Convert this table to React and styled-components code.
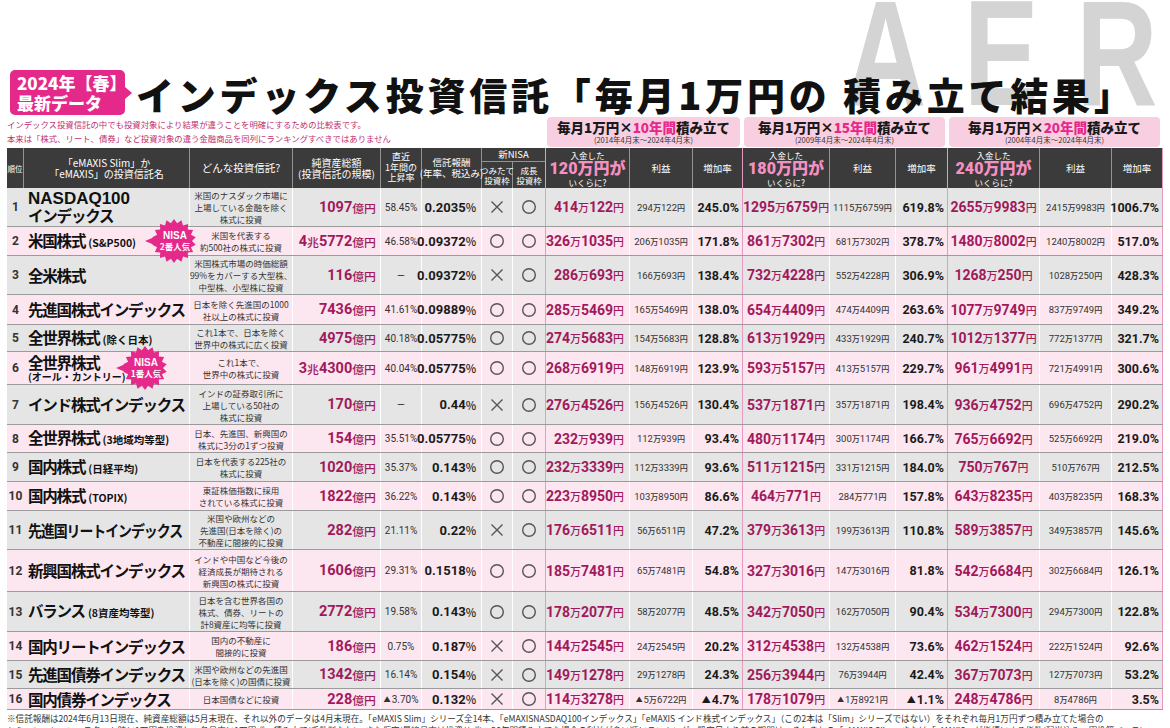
import React from "react";
import styled, { createGlobalStyle } from "styled-components";

const COLS = "17px 166px 103px 88px 41px 60px 31px 33px 84px 63px 50px 87px 66px 52px 92px 72px 51px";
const JP = `"Noto Sans CJK JP", sans-serif`;
const NUM = `"Liberation Sans Narrow", "Roboto", "Noto Sans CJK JP", sans-serif`;
const MAGENTA = "#a1195c";
const PINK = "#e5298a";
const GROUP_LINE = "#e59bbf";

const groups = [
  { years: "10年間", span: "(2014年4月末～2024年4月末)", paid: "120万円が" },
  { years: "15年間", span: "(2009年4月末～2024年4月末)", paid: "180万円が" },
  { years: "20年間", span: "(2004年4月末～2024年4月末)", paid: "240万円が" },
];

const funds = [
  { rank: 1, lines: ["NASDAQ100", "インデックス"], latin: true, h: 39,
    desc: ["米国のナスダック市場に", "上場している金融を除く", "株式に投資"],
    asset: "1097億円", rise: "58.45%", fee: "0.2035%", tsumitate: false,
    res: [["414万122円", "294万122円", "245.0%"], ["1295万6759円", "1115万6759円", "619.8%"], ["2655万9983円", "2415万9983円", "1006.7%"]] },
  { rank: 2, name: "米国株式", sub: "(S&P500)", badge: "2番人気", h: 29,
    desc: ["米国を代表する", "約500社の株式に投資"],
    asset: "4兆5772億円", rise: "46.58%", fee: "0.09372%", tsumitate: true,
    res: [["326万1035円", "206万1035円", "171.8%"], ["861万7302円", "681万7302円", "378.7%"], ["1480万8002円", "1240万8002円", "517.0%"]] },
  { rank: 3, name: "全米株式", h: 39,
    desc: ["米国株式市場の時価総額", "99%をカバーする大型株、", "中型株、小型株に投資"],
    asset: "116億円", rise: "—", fee: "0.09372%", tsumitate: false,
    res: [["286万693円", "166万693円", "138.4%"], ["732万4228円", "552万4228円", "306.9%"], ["1268万250円", "1028万250円", "428.3%"]] },
  { rank: 4, name: "先進国株式インデックス", h: 30,
    desc: ["日本を除く先進国の1000", "社以上の株式に投資"],
    asset: "7436億円", rise: "41.61%", fee: "0.09889%", tsumitate: true,
    res: [["285万5469円", "165万5469円", "138.0%"], ["654万4409円", "474万4409円", "263.6%"], ["1077万9749円", "837万9749円", "349.2%"]] },
  { rank: 5, name: "全世界株式", sub: "(除く日本)", h: 27,
    desc: ["これ1本で、日本を除く", "世界中の株式に広く投資"],
    asset: "4975億円", rise: "40.18%", fee: "0.05775%", tsumitate: true,
    res: [["274万5683円", "154万5683円", "128.8%"], ["613万1929円", "433万1929円", "240.7%"], ["1012万1377円", "772万1377円", "321.7%"]] },
  { rank: 6, name: "全世界株式", second: "(オール・カントリー)", badge: "1番人気", h: 33,
    desc: ["これ1本で、", "世界中の株式に投資"],
    asset: "3兆4300億円", rise: "40.04%", fee: "0.05775%", tsumitate: true,
    res: [["268万6919円", "148万6919円", "123.9%"], ["593万5157円", "413万5157円", "229.7%"], ["961万4991円", "721万4991円", "300.6%"]] },
  { rank: 7, name: "インド株式インデックス", h: 40,
    desc: ["インドの証券取引所に", "上場している50社の", "株式に投資"],
    asset: "170億円", rise: "—", fee: "0.44%", tsumitate: false,
    res: [["276万4526円", "156万4526円", "130.4%"], ["537万1871円", "357万1871円", "198.4%"], ["936万4752円", "696万4752円", "290.2%"]] },
  { rank: 8, name: "全世界株式", sub: "(3地域均等型)", h: 28,
    desc: ["日本、先進国、新興国の", "株式に3分の1ずつ投資"],
    asset: "154億円", rise: "35.51%", fee: "0.05775%", tsumitate: true,
    res: [["232万939円", "112万939円", "93.4%"], ["480万1174円", "300万1174円", "166.7%"], ["765万6692円", "525万6692円", "219.0%"]] },
  { rank: 9, name: "国内株式", sub: "(日経平均)", h: 29,
    desc: ["日本を代表する225社の", "株式に投資"],
    asset: "1020億円", rise: "35.37%", fee: "0.143%", tsumitate: true,
    res: [["232万3339円", "112万3339円", "93.6%"], ["511万1215円", "331万1215円", "184.0%"], ["750万767円", "510万767円", "212.5%"]] },
  { rank: 10, name: "国内株式", sub: "(TOPIX)", h: 29,
    desc: ["東証株価指数に採用", "されている株式に投資"],
    asset: "1822億円", rise: "36.22%", fee: "0.143%", tsumitate: true,
    res: [["223万8950円", "103万8950円", "86.6%"], ["464万771円", "284万771円", "157.8%"], ["643万8235円", "403万8235円", "168.3%"]] },
  { rank: 11, name: "先進国リートインデックス", squeeze: 0.9, h: 39,
    desc: ["米国や欧州などの", "先進国(日本を除く)の", "不動産に間接的に投資"],
    asset: "282億円", rise: "21.11%", fee: "0.22%", tsumitate: false,
    res: [["176万6511円", "56万6511円", "47.2%"], ["379万3613円", "199万3613円", "110.8%"], ["589万3857円", "349万3857円", "145.6%"]] },
  { rank: 12, name: "新興国株式インデックス", h: 42,
    desc: ["インドや中国など今後の", "経済成長が期待される", "新興国の株式に投資"],
    asset: "1606億円", rise: "29.31%", fee: "0.1518%", tsumitate: true,
    res: [["185万7481円", "65万7481円", "54.8%"], ["327万3016円", "147万3016円", "81.8%"], ["542万6684円", "302万6684円", "126.1%"]] },
  { rank: 13, name: "バランス", sub: "(8資産均等型)", h: 40,
    desc: ["日本を含む世界各国の", "株式、債券、リートの", "計8資産に均等に投資"],
    asset: "2772億円", rise: "19.58%", fee: "0.143%", tsumitate: true,
    res: [["178万2077円", "58万2077円", "48.5%"], ["342万7050円", "162万7050円", "90.4%"], ["534万7300円", "294万7300円", "122.8%"]] },
  { rank: 14, name: "国内リートインデックス", h: 29,
    desc: ["国内の不動産に", "間接的に投資"],
    asset: "186億円", rise: "0.75%", fee: "0.187%", tsumitate: false,
    res: [["144万2545円", "24万2545円", "20.2%"], ["312万4538円", "132万4538円", "73.6%"], ["462万1524円", "222万1524円", "92.6%"]] },
  { rank: 15, name: "先進国債券インデックス", h: 28,
    desc: ["米国や欧州などの先進国", "(日本を除く)の国債に投資"],
    asset: "1342億円", rise: "16.14%", fee: "0.154%", tsumitate: false,
    res: [["149万1278円", "29万1278円", "24.3%"], ["256万3944円", "76万3944円", "42.4%"], ["367万7073円", "127万7073円", "53.2%"]] },
  { rank: 16, name: "国内債券インデックス", h: 21,
    desc: ["日本国債などに投資"],
    asset: "228億円", rise: "▲3.70%", fee: "0.132%", tsumitate: false,
    res: [["114万3278円", "▲5万6722円", "▲4.7%"], ["178万1079円", "▲1万8921円", "▲1.1%"], ["248万4786円", "8万4786円", "3.5%"]] },
];

const GlobalStyle = createGlobalStyle`
  html, body { margin: 0; padding: 0; background: #fff; }
  body { font-family: ${JP}; color: #222; width: 1170px; height: 728px; overflow: hidden; }
`;

const Page = styled.div`
  position: relative;
  z-index: 0;
  width: 1170px;
  height: 728px;
  overflow: hidden;
  padding: 68px 0 0 7px;
  box-sizing: border-box;
  background: #fff;
`;

// the magazine logo sits behind the headline, clipped at the page top
const WatermarkClip = styled.div`
  position: absolute;
  left: 845px;
  top: 0;
  z-index: -1;
  width: 325px;
  height: 106px;
  overflow: hidden;
`;

const Watermark = styled.div`
  margin-top: -7px;
  font: 700 150px/120px "Liberation Sans", sans-serif;
  letter-spacing: 50px;
  color: #d4d4d4;
  white-space: nowrap;
  transform: scaleX(0.75);
  transform-origin: left top;
`;

const TitleRow = styled.div`
  display: flex;
  align-items: center;
  height: 49px;
  padding-left: 3px;
`;

const SeasonBadge = styled.div`
  position: relative;
  width: 115px;
  height: 45px;
  box-sizing: border-box;
  padding-left: 7px;
  background: ${PINK};
  border-radius: 5px;
  color: #fff;
  font: 900 17px/20px ${JP};
  display: flex;
  flex-direction: column;
  justify-content: center;

  &::after {
    content: "";
    position: absolute;
    right: -7px;
    top: 50%;
    margin-top: -6px;
    border-left: 7px solid ${PINK};
    border-top: 6px solid transparent;
    border-bottom: 6px solid transparent;
  }
`;

const Title = styled.h1`
  margin: 2px 0 0 11px;
  font: 900 38px/1 ${JP};
  letter-spacing: 3.8px;
  color: #111;
  white-space: nowrap;
`;

const Grid = styled.div`
  display: grid;
  grid-template-columns: ${COLS};
  width: max-content;
`;

const CaptionRow = styled(Grid)`
  height: 31px;
`;

const Lead = styled.div`
  grid-column: 1 / 9;
  display: flex;
  flex-direction: column;
  font: 8.4px/14px ${JP};
  color: #c2306f;
  white-space: nowrap;
`;

const GroupBox = styled.div`
  grid-column: span 3;
  margin: 0 3px 1px 1px;
  background: #f8cfe1;
  border-radius: 4px;
  display: flex;
  flex-direction: column;
  align-items: center;
  justify-content: center;
`;

const GroupTitle = styled.div`
  font: 900 13.5px/16px ${JP};
  color: #1a1a1a;
  white-space: nowrap;

  em {
    font-style: normal;
    color: ${PINK};
  }
`;

const GroupSpan = styled.div`
  font: 7.5px/10px ${JP};
  color: #333;
  white-space: nowrap;
`;

const Head = styled(Grid)`
  height: 40px;
  grid-template-rows: 14px 26px;
  background: #3b3b3b;
  color: #fff;
`;

const HCell = styled.div`
  grid-column: ${p => p.$col};
  grid-row: ${p => p.$row || "1 / 3"};
  display: flex;
  flex-direction: column;
  align-items: center;
  justify-content: center;
  text-align: center;
  white-space: nowrap;
  font: ${p => (p.$size || 9.5)}px/${p => (p.$size || 9.5) + 1.5}px ${JP};
  box-sizing: border-box;
  border-right: 1px solid ${p => (p.$group ? GROUP_LINE : "rgba(255,255,255,0.45)")};
  border-bottom: ${p => (p.$line ? "1px solid rgba(255,255,255,0.45)" : "none")};
`;

const Paid = styled.span`
  font: 900 16px/17px ${NUM};
  color: #f690c2;
`;

const Row = styled(Grid)`
  height: ${p => p.$h}px;
  box-sizing: border-box;
  background: ${p => (p.$pink ? "#fce6ef" : "#e5e5e5")};
  border-bottom: 1px solid #9b9b9b;
`;

const Cell = styled.div`
  display: flex;
  align-items: center;
  justify-content: ${p => p.$align || "center"};
  min-width: 0;
  box-sizing: border-box;
  white-space: nowrap;
  border-right: 1px solid ${p => (p.$group ? GROUP_LINE : "#fff")};
`;

const Rank = styled(Cell)`
  font: 700 12px ${NUM};
  color: #333;
  border-right: none;
`;

const Name = styled(Cell)`
  position: relative;
  flex-direction: column;
  align-items: flex-start;
  justify-content: center;
  padding-left: 4px;
  font: 700 15.5px/17px ${JP};
  letter-spacing: -1.2px;
  color: #111;
`;

const NameText = styled.span`
  display: inline-block;
  transform: scaleX(${p => p.$sx || 1});
  transform-origin: left center;
`;

const Latin = styled.div`
  font: 700 17px/17px "Liberation Sans", sans-serif;
  letter-spacing: 0;
`;

const Sub = styled.span`
  margin-left: 3px;
  font-size: 10.5px;
  letter-spacing: 0;
`;

const SubLine = styled.div`
  font-size: 10px;
  line-height: 11px;
  letter-spacing: 0;
`;

const Desc = styled(Cell)`
  flex-direction: column;
  font: 8.5px/12px ${JP};
  color: #333;
`;

const Asset = styled(Cell)`
  padding-right: 4px;
  font: 700 14.5px ${NUM};
  color: ${MAGENTA};
`;

const Rise = styled(Cell)`
  font: 10px ${NUM};
  color: #333;
`;

const Fee = styled(Cell)`
  padding-right: 5px;
  font: 700 13px ${NUM};
  color: #1a1a1a;
`;

const Amount = styled(Cell)`
  padding-right: ${p => (p.$first ? 5 : 0)}px;
  font: 700 14px ${NUM};
  color: ${MAGENTA};
`;

const Profit = styled(Cell)`
  font: 9.5px ${NUM};
  color: #333;
`;

const Rate = styled(Cell)`
  padding-right: 3px;
  font: 700 12.5px ${NUM};
  color: #1a1a1a;
`;

const Unit = styled.span`
  font-family: ${JP};
  font-size: ${p => p.$scale || 0.78}em;
  font-weight: 500;
`;

const Tri = styled.span`
  font-family: ${JP};
  font-size: 0.72em;
  margin-right: 1px;
`;

const NisaBadge = styled.div`
  position: absolute;
  left: ${p => p.$x}px;
  top: ${p => p.$y}px;
  z-index: 2;
  width: 52px;
  height: 46px;
  display: grid;
  letter-spacing: 0;

  & > * {
    grid-area: 1 / 1;
  }
`;

const NisaLabel = styled.div`
  display: flex;
  flex-direction: column;
  align-items: center;
  justify-content: center;
  padding-left: 8px;
  color: #fff;
  font: 700 10px/10px "Liberation Sans", ${JP};

  small {
    font: 700 8.5px/10px ${JP};
  }
`;

const Footer = styled.div`
  margin-top: 2px;
  font: 8.6px/12px ${JP};
  color: #333;
  white-space: nowrap;
`;

function starPoints() {
  const pts = [];
  const cx = 29, cy = 23, n = 18;
  for (let i = 0; i < n * 2; i++) {
    const r = i % 2 === 0 ? 22 : 18;
    const a = (Math.PI * i) / n - Math.PI / 2;
    pts.push(`${(cx + r * Math.cos(a)).toFixed(1)},${(cy + r * Math.sin(a)).toFixed(1)}`);
  }
  return pts.join(" ");
}

function Nisa({ label, x, y }) {
  return (
    <NisaBadge $x={x} $y={y}>
      <svg width="52" height="46" viewBox="0 0 52 46">
        <polygon points="0,23 12,18 12,28" fill={PINK} />
        <polygon points={starPoints()} fill={PINK} />
      </svg>
      <NisaLabel>
        <span>NISA</span>
        <small>{label}</small>
      </NisaLabel>
    </NisaBadge>
  );
}

function Money({ value, scale }) {
  return value
    .split(/([\d.]+)/)
    .filter(Boolean)
    .map((part, i) => {
      if (/\d/.test(part)) return <span key={i}>{part}</span>;
      if (part === "▲") return <Tri key={i}>▲</Tri>;
      return <Unit key={i} $scale={scale}>{part}</Unit>;
    });
}

function Signed({ value }) {
  if (!value.startsWith("▲")) return value;
  return (
    <>
      <Tri>▲</Tri>
      {value.slice(1)}
    </>
  );
}

const Circle = () => (
  <svg width="16" height="16" viewBox="0 0 16 16">
    <circle cx="8" cy="8" r="6.3" fill="none" stroke="#555" strokeWidth="1.4" />
  </svg>
);

const Cross = () => (
  <svg width="16" height="16" viewBox="0 0 16 16">
    <path d="M2.5 2.5L13.5 13.5M13.5 2.5L2.5 13.5" stroke="#555" strokeWidth="1.4" />
  </svg>
);

function FundName({ fund }) {
  if (fund.latin) {
    return (
      <Name>
        <Latin>{fund.lines[0]}</Latin>
        <div>{fund.lines[1]}</div>
      </Name>
    );
  }
  return (
    <Name>
      <div>
        <NameText $sx={fund.squeeze}>{fund.name}</NameText>
        {fund.sub && <Sub>{fund.sub}</Sub>}
      </div>
      {fund.second && <SubLine>{fund.second}</SubLine>}
      {fund.badge && <Nisa label={fund.badge} x={fund.rank === 2 ? 121 : 92} y={fund.rank === 2 ? -9 : -7} />}
    </Name>
  );
}

export default function App() {
  return (
    <Page>
      <GlobalStyle />
      <WatermarkClip>
        <Watermark>AERA</Watermark>
      </WatermarkClip>
      <TitleRow>
        <SeasonBadge>
          <span>2024年【春】</span>
          <span>最新データ</span>
        </SeasonBadge>
        <Title>インデックス投資信託「毎月1万円の 積み立て結果」</Title>
      </TitleRow>

      <CaptionRow>
        <Lead>
          <span>インデックス投資信託の中でも投資対象により結果が違うことを明確にするための比較表です。</span>
          <span>本来は「株式、リート、債券」など投資対象の違う金融商品を同列にランキングすべきではありません</span>
        </Lead>
        {groups.map(g => (
          <GroupBox key={g.years}>
            <GroupTitle>毎月1万円×<em>{g.years}</em>積み立て</GroupTitle>
            <GroupSpan>{g.span}</GroupSpan>
          </GroupBox>
        ))}
      </CaptionRow>

      <Head>
        <HCell $col="1" $size={7.5}>順位</HCell>
        <HCell $col="2" $size={10}><span>「eMAXIS Slim」か</span><span>「eMAXIS」の投資信託名</span></HCell>
        <HCell $col="3" $size={10.5}>どんな投資信託?</HCell>
        <HCell $col="4" $size={10}><span>純資産総額</span><span>(投資信託の規模)</span></HCell>
        <HCell $col="5" $size={9}><span>直近</span><span>1年間の</span><span>上昇率</span></HCell>
        <HCell $col="6" $size={9.5}><span>信託報酬</span><span>(年率、税込み)</span></HCell>
        <HCell $col="7 / 9" $row="1" $line $group>新NISA</HCell>
        <HCell $col="7" $row="2" $size={8.5}><span>つみたて</span><span>投資枠</span></HCell>
        <HCell $col="8" $row="2" $size={8.5} $group><span>成長</span><span>投資枠</span></HCell>
        {groups.map((g, i) => (
          <React.Fragment key={g.paid}>
            <HCell $col={9 + i * 3} $size={8.5}>
              <span>入金した</span>
              <Paid>{g.paid}</Paid>
              <span>いくらに?</span>
            </HCell>
            <HCell $col={10 + i * 3}>利益</HCell>
            <HCell $col={11 + i * 3} $group>増加率</HCell>
          </React.Fragment>
        ))}
      </Head>

      {funds.map(f => (
        <Row key={f.rank} $h={f.h} $pink={f.rank % 2 === 0}>
          <Rank>{f.rank}</Rank>
          <FundName fund={f} />
          <Desc>{f.desc.map(line => <span key={line}>{line}</span>)}</Desc>
          <Asset $align="flex-end"><Money value={f.asset} scale={0.82} /></Asset>
          <Rise><Signed value={f.rise} /></Rise>
          <Fee $align="flex-end"><Money value={f.fee} scale={0.85} /></Fee>
          <Cell>{f.tsumitate ? <Circle /> : <Cross />}</Cell>
          <Cell $group><Circle /></Cell>
          {f.res.map(([total, profit, rate], i) => (
            <React.Fragment key={i}>
              <Amount $first={i === 0} $align={i === 0 ? "flex-end" : "center"}><Money value={total} /></Amount>
              <Profit><Money value={profit} scale={0.85} /></Profit>
              <Rate $align="flex-end" $group><Signed value={rate} /></Rate>
            </React.Fragment>
          ))}
        </Row>
      ))}

      <Footer>
        <div>※信託報酬は2024年6月13日現在、純資産総額は5月末現在、それ以外のデータは4月末現在。「eMAXIS Slim」シリーズ全14本、「eMAXISNASDAQ100インデックス」「eMAXIS インド株式インデックス」（この2本は「Slim」シリーズではない）をそれぞれ毎月1万円ずつ積み立てた場合の</div>
        <div>シミュレーション。スタート時に1万円を投資し、各月末に1万円ずつ積み立て(手数料なし)、また仮定(最終月末は投資せず)。20年間積み立てた場合の利益が多い順にランキング。設定日より前の期間は、それぞれの「eMAXIS Slim」または「eMAXIS」が指標にする指数(配当込み、円換算ベース)</div>
      </Footer>
    </Page>
  );
}
